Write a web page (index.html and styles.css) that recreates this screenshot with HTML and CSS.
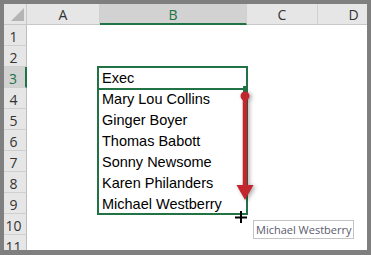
FILE: index.html
```html
<!DOCTYPE html>
<html>
<head>
<meta charset="utf-8">
<link rel="stylesheet" href="styles.css">
</head>
<body>
<div class="frame">
  <div class="sheet">
    <div class="grid">
      <div class="hdr corner"><span class="tri"></span></div>
      <div class="hdr col">A</div>
      <div class="hdr col sel-col">B</div>
      <div class="hdr col">C</div>
      <div class="hdr col">D</div>

      <div class="hdr row">1</div><div class="cell"></div><div class="cell"></div><div class="cell"></div><div class="cell"></div>
      <div class="hdr row">2</div><div class="cell"></div><div class="cell"></div><div class="cell"></div><div class="cell"></div>
      <div class="hdr row sel-row">3</div><div class="cell"></div><div class="cell">Exec</div><div class="cell"></div><div class="cell"></div>
      <div class="hdr row">4</div><div class="cell"></div><div class="cell">Mary Lou Collins</div><div class="cell"></div><div class="cell"></div>
      <div class="hdr row">5</div><div class="cell"></div><div class="cell">Ginger Boyer</div><div class="cell"></div><div class="cell"></div>
      <div class="hdr row">6</div><div class="cell"></div><div class="cell">Thomas Babott</div><div class="cell"></div><div class="cell"></div>
      <div class="hdr row">7</div><div class="cell"></div><div class="cell">Sonny Newsome</div><div class="cell"></div><div class="cell"></div>
      <div class="hdr row">8</div><div class="cell"></div><div class="cell">Karen Philanders</div><div class="cell"></div><div class="cell"></div>
      <div class="hdr row">9</div><div class="cell"></div><div class="cell">Michael Westberry</div><div class="cell"></div><div class="cell"></div>
      <div class="hdr row">10</div><div class="cell"></div><div class="cell"></div><div class="cell"></div><div class="cell"></div>
      <div class="hdr row">11</div><div class="cell"></div><div class="cell"></div><div class="cell"></div><div class="cell"></div>
    </div>

    <div class="range"></div>
    <div class="active-line"></div>
    <div class="handle"></div>

    <svg class="arrow" width="22" height="116" viewBox="0 0 22 116">
      <line x1="10" y1="6" x2="10" y2="98" stroke="#c1272d" stroke-width="4.5"/>
      <circle cx="10" cy="6" r="4.5" fill="#c1272d"/>
      <polygon points="1.5,95 18.5,95 10,110" fill="#c1272d"/>
    </svg>

    <svg class="cursor" width="13" height="13" viewBox="0 0 13 13">
      <rect x="0" y="5.5" width="12" height="2" fill="#000"/>
      <rect x="5" y="0" width="2" height="12" fill="#000"/>
    </svg>

    <div class="tip">Michael Westberry</div>
  </div>
</div>
</body>
</html>
```

FILE: styles.css
```css
* { box-sizing: border-box; }
html, body { margin: 0; padding: 0; }
body { width: 371px; height: 255px; overflow: hidden; background: #7f7f7f; }

.frame {
  width: 371px;
  height: 255px;
  padding: 4px 4px 5px 4px;
  background: #7f7f7f;
}

.sheet {
  position: relative;
  width: 363px;
  height: 246px;
  background: #fff;
  overflow: hidden;
}

.grid {
  display: grid;
  grid-template-columns: 23px 73px 147px 71px 72px;
  grid-auto-rows: 21px;
  width: 386px;
}

.hdr {
  background: #e6e6e6;
  color: #333;
  font-family: "Open Sans", "Noto Sans", sans-serif;
  font-size: 14px;
  display: flex;
  align-items: center;
  justify-content: center;
  border-right: 1px solid #c8c8c8;
  border-bottom: 1px solid #c8c8c8;
}

.corner { position: relative; }
.tri {
  position: absolute;
  right: 2px;
  bottom: 3px;
  width: 0;
  height: 0;
  border-left: 13px solid transparent;
  border-bottom: 13px solid #b4b4b4;
}

.col { border-right-color: #d0d0d0; padding-top: 1px; }
.sel-col {
  background: #d2d2d2;
  color: #217346;
  border-bottom: 2px solid #217346;
}

.row {
  justify-content: center;
  padding-right: 3px;
  padding-top: 2px;
  border-right: 1px solid #bdbdbd;
  border-bottom-color: #cfcfcf;
}
.sel-row {
  background: #d2d2d2;
  color: #217346;
  border-right: 2px solid #217346;
}

.cell {
  font-family: "Liberation Sans", Arial, sans-serif;
  font-size: 14.5px;
  color: #000;
  padding: 0 0 0 2px;
  display: flex;
  align-items: flex-end;
  padding-bottom: 2px;
  white-space: nowrap;
}

.range {
  position: absolute;
  left: 93px;
  top: 62px;
  width: 151px;
  height: 149px;
  border: 2px solid #217346;
}
.active-line {
  position: absolute;
  left: 93px;
  top: 84px;
  width: 151px;
  height: 2px;
  background: #217346;
}
.handle {
  position: absolute;
  left: 239px;
  top: 82px;
  width: 5px;
  height: 6px;
  background: #217346;
}

.arrow {
  position: absolute;
  left: 231px;
  top: 86px;
  filter: drop-shadow(2px 1px 2px rgba(0,0,0,0.35));
}

.cursor {
  position: absolute;
  left: 231px;
  top: 207px;
}

.tip {
  position: absolute;
  left: 249px;
  top: 216px;
  width: 101px;
  height: 19px;
  background: #fff;
  border: 1px solid #c4c4c4;
  font-family: "Open Sans", "Noto Sans", sans-serif;
  font-size: 11px;
  color: #5a5a6e;
  line-height: 17px;
  padding-left: 2px;
  white-space: nowrap;
}
```
